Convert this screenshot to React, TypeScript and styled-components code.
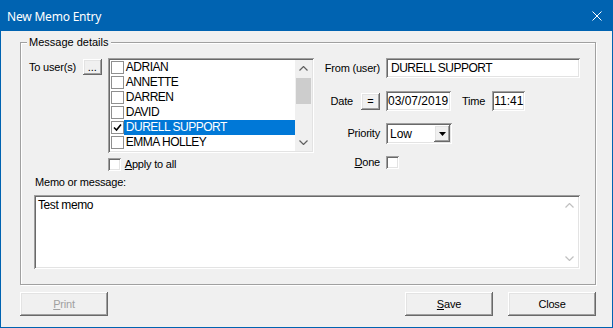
import * as React from 'react';
import styled, { createGlobalStyle, css } from 'styled-components';

const labelFont = `"Liberation Sans", Arial, sans-serif`;
const dataFont = `"Liberation Sans", Arial, sans-serif`;

const GlobalStyle = createGlobalStyle`
  html, body {
    margin: 0;
    padding: 0;
    background: #ffffff;
  }
  body {
    font-family: ${labelFont};
    font-size: 11px;
    color: #000;
  }
`;

const raised = css`
  background: #f0f0f0;
  box-shadow: inset -1px -1px #696969, inset 1px 1px #ffffff, inset -2px -2px #a0a0a0, inset 2px 2px #e3e3e3;
`;

const sunken = css`
  background: #ffffff;
  box-shadow: inset 1px 1px #a0a0a0, inset -1px -1px #ffffff, inset 2px 2px #696969, inset -2px -2px #e3e3e3;
`;

const Window = styled.div`
  width: 613px;
  height: 328px;
  box-sizing: border-box;
  border: 1px solid #0063b1;
  background: #f0f0f0;
  display: flex;
  flex-direction: column;
  overflow: hidden;
`;

const TitleBar = styled.div`
  height: 30px;
  flex: none;
  background: #0063b1;
  color: #ffffff;
  display: flex;
  align-items: center;
  justify-content: space-between;
  padding: 0 10px 0 6px;
  font: 12px "Noto Sans", sans-serif;
  letter-spacing: -0.2px;
`;

const Client = styled.div`
  flex: 1;
  display: flex;
  flex-direction: column;
  padding: 11px 16px 11px 19px;
`;

const GroupBox = styled.div`
  position: relative;
  border: 1px solid #a0a0a0;
  box-shadow: inset 1px 1px #ffffff, 1px 1px #ffffff;
  padding: 15px 15px 15px 8px;
`;

const Legend = styled.span`
  position: absolute;
  top: -7px;
  left: 6px;
  padding: 0 2px;
  line-height: 13px;
  background: #f0f0f0;
`;

const TopRow = styled.div`
  display: flex;
  align-items: flex-start;
`;

const Label = styled.span`
  line-height: 13px;
  white-space: nowrap;
  letter-spacing: -0.2px;
`;

const ToLabel = styled(Label)`
  width: 54px;
  margin-top: 3px;
`;

const SmallButton = styled.div<{ $w: number; $h: number }>`
  ${raised};
  width: ${p => p.$w}px;
  height: ${p => p.$h}px;
  flex: none;
  box-sizing: border-box;
  display: flex;
  align-items: center;
  justify-content: center;
  font-size: 11px;
  line-height: 11px;
`;

const ListColumn = styled.div`
  display: flex;
  flex-direction: column;
  width: 207px;
  margin-left: 6px;
`;

const ListBox = styled.div`
  ${sunken};
  height: 95px;
  box-sizing: border-box;
  padding: 2px;
  display: flex;
`;

const ListItems = styled.div`
  flex: 1;
  display: flex;
  flex-direction: column;
  padding-left: 1px;
`;

const ListItem = styled.div`
  height: 15px;
  display: flex;
  align-items: center;
`;

const ItemCheck = styled.span`
  width: 13px;
  height: 13px;
  box-sizing: border-box;
  border: 1px solid #8f8f8f;
  background: #ffffff;
  display: flex;
  align-items: center;
  justify-content: center;
  flex: none;
`;

const ItemText = styled.span<{ $selected?: boolean }>`
  flex: 1;
  height: 15px;
  line-height: 15px;
  padding-left: 2px;
  font: 12px ${dataFont};
  letter-spacing: -0.5px;
  background: ${p => (p.$selected ? '#0078d7' : 'transparent')};
  color: ${p => (p.$selected ? '#ffffff' : '#000000')};
`;

const ScrollBar = styled.div<{ $bg: string }>`
  width: 17px;
  flex: none;
  background: ${p => p.$bg};
  display: flex;
  flex-direction: column;
`;

const ArrowBox = styled.div`
  height: 17px;
  display: flex;
  align-items: center;
  justify-content: center;
`;

const Thumb = styled.div`
  width: 15px;
  height: 26px;
  margin: 1px 0 0 1px;
  background: #cdcdcd;
`;

const Spacer = styled.div`
  flex: 1;
`;

const CheckRow = styled.div<{ $mt?: number }>`
  display: flex;
  align-items: center;
  gap: 4px;
  height: 13px;
  margin-top: ${p => p.$mt ?? 0}px;
`;

const CheckBox = styled.span`
  ${sunken};
  width: 13px;
  height: 13px;
  flex: none;
`;

const RightForm = styled.div`
  display: flex;
  flex-direction: column;
`;

const FormRow = styled.div<{ $h: number; $mt?: number }>`
  display: flex;
  align-items: center;
  height: ${p => p.$h}px;
  margin-top: ${p => p.$mt ?? 0}px;
`;

const FieldLabel = styled.div`
  width: 66px;
  margin-right: 6px;
  display: flex;
  justify-content: flex-end;
  align-items: center;
  gap: 8px;
`;

const TextField = styled.div<{ $w: number; $pl: number; $ls?: number }>`
  ${sunken};
  width: ${p => p.$w}px;
  height: 100%;
  box-sizing: border-box;
  padding: 0 0 0 ${p => p.$pl}px;
  display: flex;
  align-items: center;
  font: 12px ${dataFont};
  letter-spacing: ${p => p.$ls ?? 0}px;
  white-space: nowrap;
  overflow: hidden;
`;

const TimeLabel = styled(Label)`
  margin: 0 7px 0 11px;
`;

const Select = styled.div`
  ${sunken};
  width: 66px;
  height: 100%;
  box-sizing: border-box;
  padding: 2px;
  display: flex;
`;

const SelectValue = styled.span`
  flex: 1;
  padding-left: 2px;
  display: flex;
  align-items: center;
  font: 12px ${dataFont};
`;

const DropButton = styled.div`
  ${raised};
  width: 16px;
  display: flex;
  align-items: center;
  justify-content: center;
`;

const MemoLabel = styled(Label)`
  display: block;
  margin: 5px 0 0 6px;
`;

const MemoBox = styled.div`
  ${sunken};
  width: 546px;
  height: 74px;
  box-sizing: border-box;
  margin: 6px 0 0 5px;
  padding: 2px;
  display: flex;
`;

const MemoText = styled.div`
  flex: 1;
  padding: 1px 0 0 2px;
  font: 12px ${dataFont};
  letter-spacing: -0.4px;
  line-height: 15px;
`;

const ButtonRow = styled.div`
  display: flex;
  justify-content: space-between;
  margin-top: 7px;
`;

const ButtonGroup = styled.div`
  display: flex;
  gap: 15px;
`;

const DialogButton = styled.div<{ $disabled?: boolean }>`
  ${raised};
  width: 88px;
  height: 24px;
  display: flex;
  align-items: center;
  justify-content: center;
  color: ${p => (p.$disabled ? '#a0a0a0' : '#000000')};
  letter-spacing: -0.2px;
`;

const Chevron = ({ up, color }: { up?: boolean; color: string }) => (
  <svg width="9" height="5" viewBox="0 0 9 5">
    <polyline
      points={up ? '0.5,4.5 4.5,0.5 8.5,4.5' : '0.5,0.5 4.5,4.5 8.5,0.5'}
      fill="none"
      stroke={color}
      strokeWidth="1.2"
    />
  </svg>
);

const users = ['ADRIAN', 'ANNETTE', 'DARREN', 'DAVID', 'DURELL SUPPORT', 'EMMA HOLLEY'];

export default function App() {
  return (
    <>
      <GlobalStyle />
      <Window>
        <TitleBar>
          <span>New Memo Entry</span>
          <svg width="10" height="10" viewBox="0 0 10 10">
            <path d="M0.5 0.5 L9.5 9.5 M9.5 0.5 L0.5 9.5" stroke="#ffffff" strokeWidth="1" />
          </svg>
        </TitleBar>
        <Client>
          <GroupBox>
            <Legend>Message details</Legend>
            <TopRow>
              <ToLabel>To user(s)</ToLabel>
              <SmallButton $w={19} $h={16} style={{ marginTop: 1 }}>...</SmallButton>
              <ListColumn>
                <ListBox>
                  <ListItems>
                    {users.map(u => (
                      <ListItem key={u}>
                        <ItemCheck>
                          {u === 'DURELL SUPPORT' && (
                            <svg width="9" height="9" viewBox="0 0 9 9">
                              <path d="M1 4.5 L3.5 7 L8 1.5" fill="none" stroke="#000" strokeWidth="1.6" />
                            </svg>
                          )}
                        </ItemCheck>
                        <ItemText $selected={u === 'DURELL SUPPORT'}>{u}</ItemText>
                      </ListItem>
                    ))}
                  </ListItems>
                  <ScrollBar $bg="#f0f0f0">
                    <ArrowBox><Chevron up color="#606060" /></ArrowBox>
                    <Thumb />
                    <Spacer />
                    <ArrowBox><Chevron color="#606060" /></ArrowBox>
                  </ScrollBar>
                </ListBox>
                <CheckRow $mt={5}>
                  <CheckBox />
                  <Label><u>A</u>pply to all</Label>
                </CheckRow>
              </ListColumn>
              <RightForm>
                <FormRow $h={20}>
                  <FieldLabel><Label>From (user)</Label></FieldLabel>
                  <TextField $w={194} $pl={5} $ls={-0.5}>DURELL SUPPORT</TextField>
                </FormRow>
                <FormRow $h={20} $mt={13}>
                  <FieldLabel>
                    <Label>Date</Label>
                    <SmallButton $w={19} $h={17}>=</SmallButton>
                  </FieldLabel>
                  <TextField $w={65} $pl={2}>03/07/2019</TextField>
                  <TimeLabel>Time</TimeLabel>
                  <TextField $w={33} $pl={2}>11:41</TextField>
                </FormRow>
                <FormRow $h={21} $mt={12}>
                  <FieldLabel><Label>Priority</Label></FieldLabel>
                  <Select>
                    <SelectValue>Low</SelectValue>
                    <DropButton>
                      <svg width="7" height="4" viewBox="0 0 7 4">
                        <polygon points="0,0 7,0 3.5,4" fill="#000" />
                      </svg>
                    </DropButton>
                  </Select>
                </FormRow>
                <FormRow $h={13} $mt={12}>
                  <FieldLabel><Label><u>D</u>one</Label></FieldLabel>
                  <CheckBox />
                </FormRow>
              </RightForm>
            </TopRow>
            <MemoLabel>Memo or message:</MemoLabel>
            <MemoBox>
              <MemoText>Test memo</MemoText>
              <ScrollBar $bg="transparent">
                <ArrowBox><Chevron up color="#c0c0c0" /></ArrowBox>
                <Spacer />
                <ArrowBox><Chevron color="#c0c0c0" /></ArrowBox>
              </ScrollBar>
            </MemoBox>
          </GroupBox>
          <ButtonRow>
            <DialogButton $disabled><span><u>P</u>rint</span></DialogButton>
            <ButtonGroup>
              <DialogButton><span><u>S</u>ave</span></DialogButton>
              <DialogButton>Close</DialogButton>
            </ButtonGroup>
          </ButtonRow>
        </Client>
      </Window>
    </>
  );
}
